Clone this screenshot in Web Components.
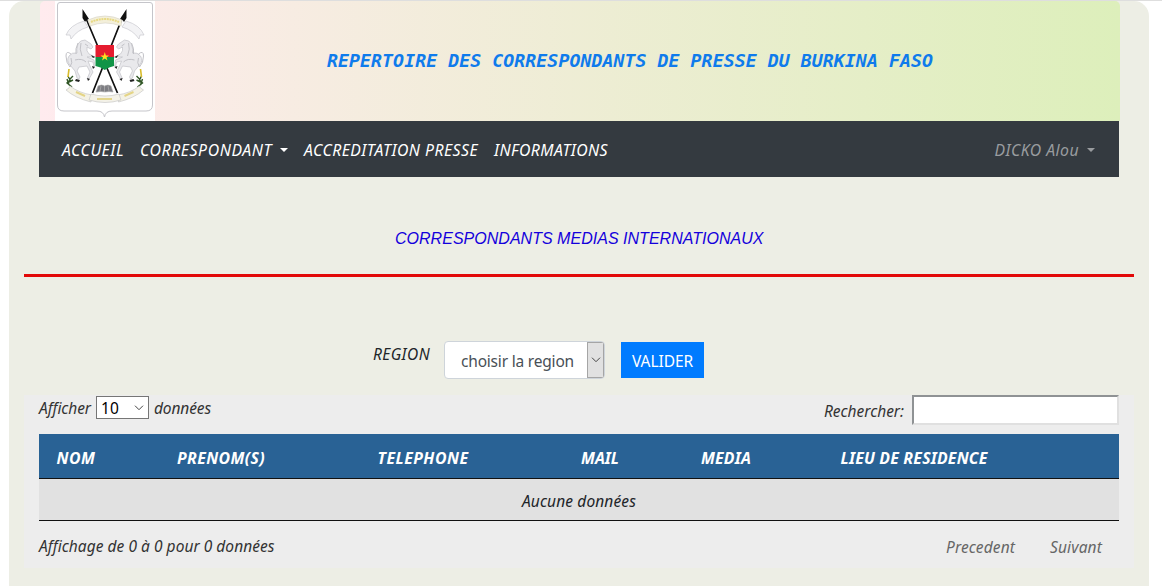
<!DOCTYPE html>
<html lang="fr">
<head>
<meta charset="utf-8">
<title>Répertoire des correspondants</title>
<style>
html,body{margin:0;height:586px;overflow:hidden;background:#fff}
body{font:italic 15.5px/24px "Noto Sans","Open Sans",sans-serif;color:#212529}
</style>
</head>
<body>
<press-page></press-page>
<script>
const define = (name, html, setup) => customElements.define(name, class extends HTMLElement {
  connectedCallback() {
    if (this.shadowRoot) return;
    const t = document.createElement('template');
    t.innerHTML = html;
    this.attachShadow({mode: 'open'}).append(t.content.cloneNode(true));
    if (setup) setup(this);
  }
});

// Inline label whose tracking is tuned so that it takes the width given in "w".
define('fit-label', `<style>:host{display:inline-block;white-space:nowrap;flex:none}span{display:inline-block;white-space:nowrap}</style><span><slot></slot></span>`, el => {
  const w = +el.getAttribute('w');
  const span = el.shadowRoot.querySelector('span');
  const fit = () => {
    span.style.letterSpacing = '0px';
    const n = el.textContent.length;
    const natural = span.getBoundingClientRect().width;
    if (natural) span.style.letterSpacing = ((w - natural) / n) + 'px';
    el.style.width = w + 'px';
  };
  requestAnimationFrame(fit);
});

const supporter = `
    <path d="M40 57L34 54Q31 51 32 47L36 49L38 47L36 44L30 40Q25 40 23 44Q21 50 22 53Q17 52 14 56Q11 61 15 65L20 71L22 78L24 79L25 77L22 71L24 67L32 66L35 72L32 79L34 79L38 72L35 66L33 61L38 62L39 67L40 66L39 60L32 57Z" fill="#e9e9ec" stroke="#c2c2c7" stroke-width=".7"/>
    <path d="M16 54Q11 50 11 56Q11 63 15 67Q18 63 16 58M23 43Q20 49 21 54M26 43Q24 49 27 56M30 44L33 46M20 60Q27 58 31 62" stroke="#c2c2c7" stroke-width="1"/>
    <path d="M21 79L25 80L24 82L20 81ZM32 78L35 79L33 81ZM37 66L40 67L38 69ZM36 55L40 57L38 58Z" fill="#222"/>
    <path d="M13 76L15 80L12 83L17 87M15 79L18 76M14 82L18 80M12 79L14 85" stroke="#315626" stroke-width="1.400"/>
    <path d="M14 69L13 77" stroke="#d8bc2d" stroke-width="1.600"/>
    <path d="M14 88L11 90Q20 98 36 102L37 95Q24 93 15 86Z" fill="#f4f2e6" stroke="#c9c9c9" stroke-width=".7"/>
    <path d="M21 92L30 96" stroke="#e4d486" stroke-width="2"/>`;

define('state-emblem', `<style>:host{display:block;width:100px;height:120px;background:#fff;flex:none}svg{display:block}</style>
<svg width="100" height="120" viewBox="0 1 100 120" fill="none">
  <path d="M5 2.500H95Q97.500 2.500 97.500 5V105Q97.500 111 91 111H57Q50.500 111 49.500 117Q48.500 111 42 111H9Q2.500 111 2.500 105V5Q2.500 2.500 5 2.500Z" stroke="#c5c5ca"/>
  <g stroke="#111" stroke-width="1.700"><path d="M30 16L62.500 93M68 16L37.500 93"/></g>
  <path d="M27.500 9L34 19L31.500 20L30 22L27.500 18ZM71.500 9L65 19L67.500 20L69 22L71.500 18Z" fill="#111"/>
  <path d="M11 35Q15 25 29 21L33 27Q22 30 16 39L15 35Z" fill="#f3f3f5" stroke="#c9c9ce" stroke-width=".7"/>
  <path d="M89 35Q85 25 71 21L67 27Q78 30 84 39L85 35Z" fill="#f3f3f5" stroke="#c9c9ce" stroke-width=".7"/>
  <path d="M33 20Q50 12 67 20L66 26Q50 20 35 26Z" fill="#f3efda" stroke="#d3d0c5" stroke-width=".6"/>
  <path d="M36 22Q50 16 64 22" stroke="#e8d983" stroke-width="2" stroke-dasharray="2 .7"/>
  <g>${supporter}</g>
  <g transform="translate(99.500 0) scale(-1 1)">${supporter}</g>
  <path d="M36 94Q50 98 64 94L66 100Q50 105 34 100Z" fill="#f4f2e8" stroke="#c8c8c8" stroke-width=".7"/>
  <path d="M42 99H57" stroke="#e3d58d" stroke-width="2"/>
  <path d="M43 86Q47 84 49.500 86Q53 84 56 86L58 92Q54 91 50 92Q46 91 41 92Z" fill="#7d7d82" stroke="#aaa" stroke-width=".6"/>
  <path d="M49.500 86V92M46 86L45 91M53 86L54 91" stroke="#bbb" stroke-width=".6"/>
  <path d="M40.500 45H59V57H40.500Z" fill="#e51c2f"/>
  <path d="M40.500 57H59V66Q54 67 49.700 70Q46 67 40.500 66Z" fill="#119447"/>
  <path d="M49.800 52L50.900 55.400H54L51.500 57.400L52.500 60.500L49.800 58.600L47 60.500L48 57.400L45.500 55.400H48.700Z" fill="#ffdf20"/>
</svg>`);

define('site-banner', `<style>
:host{display:flex;align-items:center;height:120px;width:1080px;margin-left:31px;box-sizing:border-box;padding-left:15px;background:linear-gradient(90deg,#ffebee,#ddefbb);border-radius:5px 5px 0 0;overflow:hidden}
h1{margin:0 0 0 172px;font:italic bold 18.2px/24px "DejaVu Sans Mono",monospace;color:#0f7bec}
</style><state-emblem></state-emblem><h1><fit-label w="606">REPERTOIRE DES CORRESPONDANTS DE PRESSE DU BURKINA FASO</fit-label></h1>`);

define('nav-item', `<style>:host{display:flex;align-items:center;color:#fff}
:host([muted]){color:#999c9f}
i{display:none;margin-left:8px;border:4px solid transparent;border-top-color:currentColor;border-bottom:0}
:host([menu]) i{display:block}</style><slot></slot><i></i>`);

define('nav-bar', `<style>
:host{display:flex;align-items:center;width:1080px;height:56px;margin-left:30px;padding:1px 24px 0 23px;box-sizing:border-box;background:#343a40;font-size:15.8px}
nav{display:flex;gap:16px;flex:1}
</style><nav>
<nav-item><fit-label w="62">ACCUEIL</fit-label></nav-item>
<nav-item menu><fit-label w="132">CORRESPONDANT</fit-label></nav-item>
<nav-item><fit-label w="174">ACCREDITATION PRESSE</fit-label></nav-item>
<nav-item><fit-label w="114">INFORMATIONS</fit-label></nav-item></nav>
<nav-item menu muted><fit-label w="84.500">DICKO Alou</fit-label></nav-item>`);

define('page-heading', `<style>
:host{display:block;margin:0 15px;border-bottom:3px solid #e20808;height:97px;box-sizing:content-box}
h2{margin:0 0 0 371px;padding-top:50px;font:italic 16px/24px "Liberation Sans",sans-serif;color:#1400dc}
</style><h2><fit-label w="368.500">CORRESPONDANTS MEDIAS INTERNATIONAUX</fit-label></h2>`);

define('region-form', `<style>
:host{display:flex;align-items:flex-start;margin:64px 0 0 364px;height:54px}
label{margin-top:1px;width:71px}
.select{display:flex;width:161px;height:38px;box-sizing:border-box;border:1px solid #ced4da;border-radius:4px;background:#fff;overflow:hidden;font-style:normal;color:#495057}
.select fit-label{margin:7px 0 0 16px}
.arrow{margin-left:auto;width:17px;box-sizing:border-box;background:#e1e1e1;border:1px solid #a5a5a5;display:grid;place-items:center}
button{margin:1px 0 0 16px;width:83px;height:36px;border:0;padding:2px 0 0;background:#007bff;color:#fff;font:normal 15.5px/24px "Noto Sans",sans-serif}
</style><label><fit-label w="57">REGION</fit-label></label>
<div class="select"><fit-label w="113">choisir la region</fit-label><span class="arrow"><svg width="10" height="6" viewBox="0 0 10 6" fill="none" stroke="#444"><path d="M1 .7L5 4.700L9 .7"/></svg></span></div>
<button><fit-label w="61">VALIDER</fit-label></button>`);

define('table-controls', `<style>
:host{display:flex;height:39px;color:#333}
.left{display:flex;margin-top:1px;gap:5px}
.select{width:53px;height:23px;box-sizing:border-box;border:1px solid #767676;background:#fff;color:#000;display:flex;align-items:center;justify-content:space-between;padding:1px 4px 0 4px;font-style:normal}
.search{margin-left:auto;display:flex;gap:8px}
.search fit-label{margin-top:4px}
input{box-sizing:border-box;width:207px;height:30px;border:2px solid;border-color:#8f9294 #e0e0e0 #e0e0e0 #8f9294;background:#fff;padding:0;margin:0}
</style><div class="left"><fit-label w="52">Afficher</fit-label><span class="select"><fit-label w="18">10</fit-label><svg width="10" height="6" viewBox="0 0 10 6" fill="none" stroke="#444"><path d="M1 .7L5 4.700L9 .7"/></svg></span><fit-label w="57">données</fit-label></div>
<div class="search"><fit-label w="80">Rechercher:</fit-label><input aria-label="Rechercher"></div>`);

define('data-table', `<style>
:host{display:block}
.head{display:grid;grid-template-columns:120.500px 200.500px 203.500px 120px 139.500px 1fr;height:44px;padding:3px 0 0 17.500px;box-sizing:border-box;align-items:center;background:#296295;color:#fff;font-weight:bold;font-size:15.8px}
.empty{height:43px;box-sizing:border-box;border:solid #111;border-width:1px 0;background:#e1e1e1;text-align:center;padding-top:10px}
</style><div class="head"><fit-label w="39">NOM</fit-label><fit-label w="88">PRENOM(S)</fit-label><fit-label w="91">TELEPHONE</fit-label><fit-label w="38">MAIL</fit-label><fit-label w="50">MEDIA</fit-label><fit-label w="147">LIEU DE RESIDENCE</fit-label></div>
<div class="empty"><fit-label w="114">Aucune données</fit-label></div>`);

define('table-footer', `<style>
:host{display:flex;color:#333;padding-top:13px}
div{display:flex;gap:35px;margin:1px 17px 0 auto;color:#666}
</style><fit-label w="235.500">Affichage de 0 à 0 pour 0 données</fit-label><div><fit-label w="69">Precedent</fit-label><fit-label w="52">Suivant</fit-label></div>`);

define('data-panel', `<style>:host{display:block;width:1110px;height:173px;margin-left:15px;box-sizing:border-box;padding:0 15px;background:#ededed}</style>
<table-controls></table-controls><data-table></data-table><table-footer></table-footer>`);

define('press-page', `<style>
:host{display:block;height:586px;box-sizing:border-box;border-top:1px solid #dedede;padding:0 13px 0 9px;background:#fff}
main{height:585px;background:#edeee5;border-radius:15px 15px 0 0}
</style><main><site-banner></site-banner><nav-bar></nav-bar><page-heading></page-heading><region-form></region-form><data-panel></data-panel></main>`);
</script>
</body>
</html>
